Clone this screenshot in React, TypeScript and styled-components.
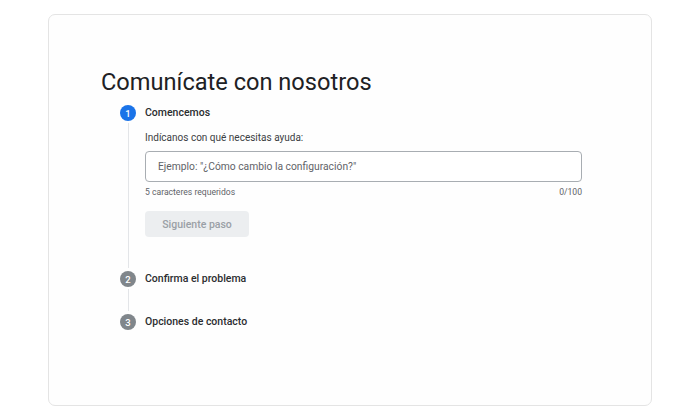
import styled, { createGlobalStyle } from 'styled-components'

type StepType = {
	number: number
	title: string
	active?: boolean
	last?: boolean
	gap?: number
	children?: React.ReactNode
}

const GlobalStyle = createGlobalStyle`
	html, body {
		margin: 0;
		padding: 0;
		background: #ffffff;
	}

	body {
		font-family: Roboto, 'Liberation Sans', Arial, sans-serif;
		color: #202124;
	}
`

const Page = styled.div`
	width: 688px;
	height: 410px;
	padding: 14px 36px 4px 48px;
	box-sizing: border-box;
`

const Card = styled.main`
	height: 100%;
	box-sizing: border-box;
	border: 1px solid #e4e4e4;
	border-radius: 7px;
	background: #fefefe;
	padding: 52px 69px 0 52px;
`

const Title = styled.h1`
	margin: 0 0 8px;
	font-size: 23.6px;
	line-height: 30px;
	font-weight: 400;
	color: #202124;
`

const Steps = styled.ol`
	list-style: none;
	margin: 0;
	padding: 0 0 0 19px;
`

const Step = styled.li`
	display: grid;
	grid-template-columns: 16px 1fr;
	column-gap: 9px;
`

const Rail = styled.div`
	display: flex;
	flex-direction: column;
	align-items: center;
`

const Circle = styled.span<{ $active?: boolean }>`
	display: flex;
	align-items: center;
	justify-content: center;
	width: 16px;
	height: 16px;
	border-radius: 50%;
	background: ${p => (p.$active ? '#1a73e8' : '#80868b')};
	color: #ffffff;
	font-size: 9.5px;
	font-weight: 500;
	flex-shrink: 0;
`

const Line = styled.span`
	flex: 1;
	width: 1px;
	background: #e3e5e8;
	margin: 2px 0 3px;
`

const StepBody = styled.div<{ $gap: number }>`
	display: flex;
	flex-direction: column;
	padding-bottom: ${p => p.$gap}px;
`

const StepTitle = styled.div`
	font-size: 10.5px;
	line-height: 16px;
	font-weight: 500;
	color: #2b2d30;
`

const Label = styled.label`
	margin-top: 10px;
	font-size: 10px;
	line-height: 14px;
	color: #3c4043;
`

const Input = styled.input`
	margin-top: 6px;
	height: 31px;
	box-sizing: border-box;
	border: 1px solid #a8adb2;
	border-radius: 4px;
	padding: 0 12px;
	font-family: inherit;
	font-size: 10.3px;
	color: #202124;
	outline: none;
	background: #ffffff;

	&::placeholder {
		color: #5f6368;
	}
`

const Helper = styled.div`
	display: flex;
	justify-content: space-between;
	margin-top: 4px;
	font-size: 8.6px;
	line-height: 13px;
	color: #5f6368;
`

const NextButton = styled.button`
	align-self: flex-start;
	margin-top: 12px;
	width: 104px;
	height: 26px;
	border: none;
	border-radius: 4px;
	background: #eceef0;
	color: #9aa0a6;
	font-family: inherit;
	font-size: 10.5px;
	font-weight: 500;
	cursor: default;
`

function StepItem({ number, title, active, last, gap = 0, children }: StepType) {
	return (
		<Step>
			<Rail>
				<Circle $active={active}>{number}</Circle>
				{!last && <Line />}
			</Rail>
			<StepBody $gap={gap}>
				<StepTitle>{title}</StepTitle>
				{children}
			</StepBody>
		</Step>
	)
}

function App() {
	return (
		<>
			<GlobalStyle />
			<Page>
				<Card>
					<Title>Comunícate con nosotros</Title>
					<Steps>
						<StepItem number={1} title='Comencemos' active gap={34}>
							<Label htmlFor='help'>Indícanos con qué necesitas ayuda:</Label>
							<Input
								id='help'
								placeholder='Ejemplo: "¿Cómo cambio la configuración?"'
							/>
							<Helper>
								<span>5 caracteres requeridos</span>
								<span>0/100</span>
							</Helper>
							<NextButton disabled>Siguiente paso</NextButton>
						</StepItem>
						<StepItem number={2} title='Confirma el problema' gap={27} />
						<StepItem number={3} title='Opciones de contacto' last />
					</Steps>
				</Card>
			</Page>
		</>
	)
}

export default App
